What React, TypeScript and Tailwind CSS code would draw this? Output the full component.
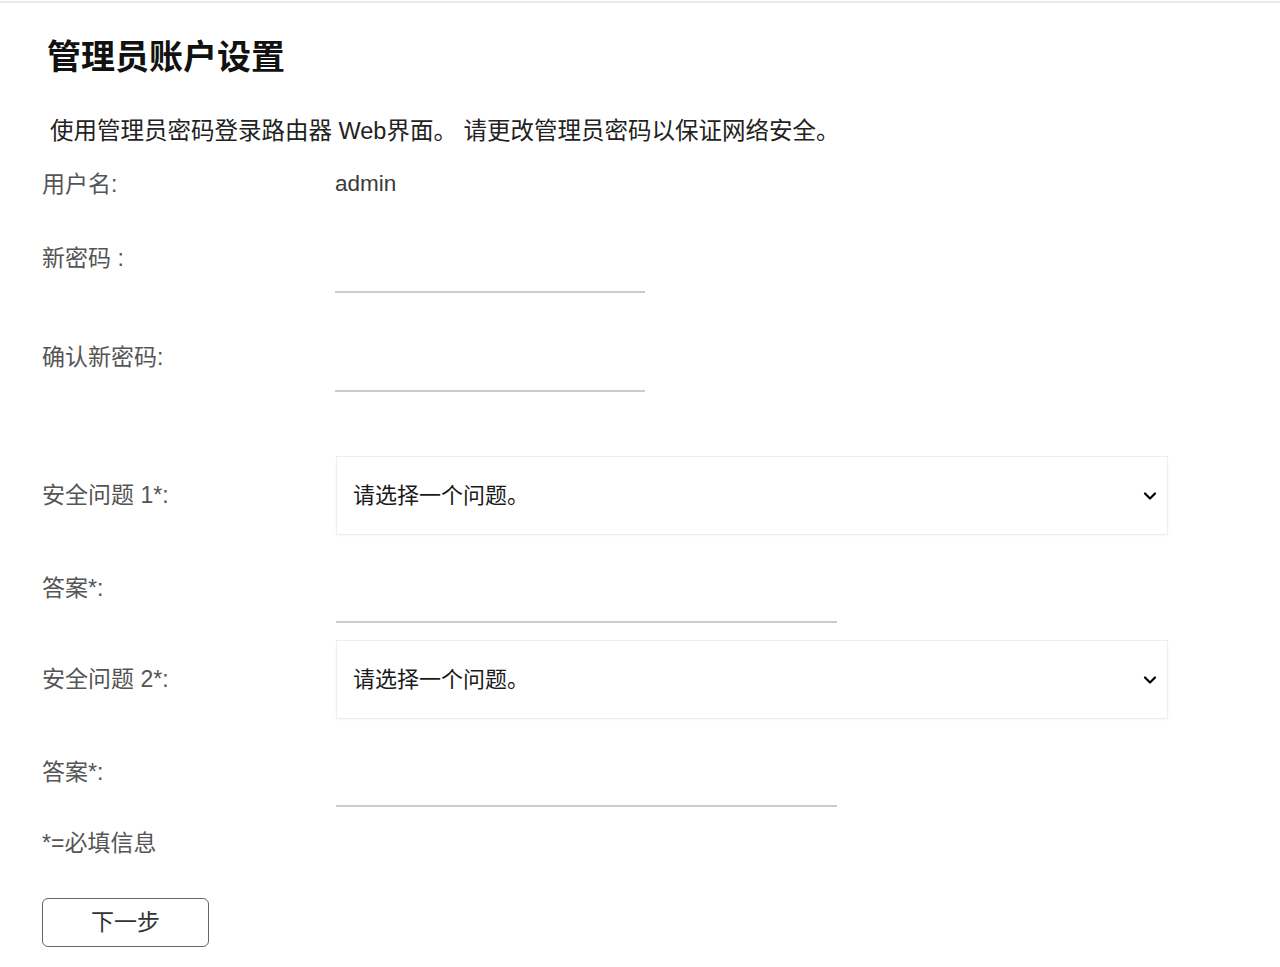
import { ChevronDown } from 'lucide-react'

const font = { fontFamily: '"Liberation Sans", "Noto Sans CJK SC", sans-serif' }

function QuestionSelect() {
  return (
    <div className="flex h-[79px] w-[832px] items-center justify-between border border-[#eeeeee] pl-4 pr-[7px] shadow-[0_1px_2px_rgba(0,0,0,0.04)]">
      <span className="text-[22px] text-[#1a1a1a]">请选择一个问题。</span>
      <ChevronDown size={20} strokeWidth={2.6} className="text-black" />
    </div>
  )
}

function LineInput({ width }: { width: string }) {
  return <input type="password" className={`h-[50px] border-b-2 border-[#cccccc] bg-transparent outline-none ${width}`} />
}

export default function App() {
  return (
    <div style={font} className="min-h-[967px] w-[1280px] bg-white">
      <div className="mt-[1px] h-[2px] bg-[#e9e9e9]" />
      <div className="pl-[42px]">
        <h1 className="mt-[34px] ml-[5px] text-[34px] font-bold leading-[40px] text-[#111111]">管理员账户设置</h1>
        <p className="mt-[39px] ml-[8px] text-[23.5px] leading-[30px] text-[#222222]">
          使用管理员密码登录路由器 Web界面。 请更改管理员密码以保证网络安全。
        </p>

        <div className="mt-[23px] flex h-[30px] items-center text-[23px]">
          <span className="w-[293px] text-[#555555]">用户名:</span>
          <span className="text-[22.5px] text-[#3a3a3a]">admin</span>
        </div>

        <div className="mt-[44px] flex items-start text-[23px]">
          <span className="w-[293px] leading-[30px] text-[#555555]">新密码 :</span>
          <LineInput width="w-[310px]" />
        </div>

        <div className="mt-[49px] flex items-start text-[23px]">
          <span className="w-[293px] leading-[30px] text-[#555555]">确认新密码:</span>
          <LineInput width="w-[310px]" />
        </div>

        <div className="mt-[64px] flex items-center text-[23px]">
          <span className="w-[294px] text-[#555555]">安全问题 1*:</span>
          <QuestionSelect />
        </div>

        <div className="mt-[38px] flex items-start text-[23px]">
          <span className="w-[294px] leading-[30px] text-[#555555]">答案*:</span>
          <LineInput width="w-[501px]" />
        </div>

        <div className="mt-[17px] flex items-center text-[23px]">
          <span className="w-[294px] text-[#555555]">安全问题 2*:</span>
          <QuestionSelect />
        </div>

        <div className="mt-[38px] flex items-start text-[23px]">
          <span className="w-[294px] leading-[30px] text-[#555555]">答案*:</span>
          <LineInput width="w-[501px]" />
        </div>

        <p className="mt-[21px] text-[23px] leading-[30px] text-[#555555]">*=必填信息</p>

        <button className="mt-[40px] h-[49px] w-[167px] rounded-[6px] border border-[#666666] text-[23px] text-[#333333]">
          下一步
        </button>
      </div>
    </div>
  )
}
